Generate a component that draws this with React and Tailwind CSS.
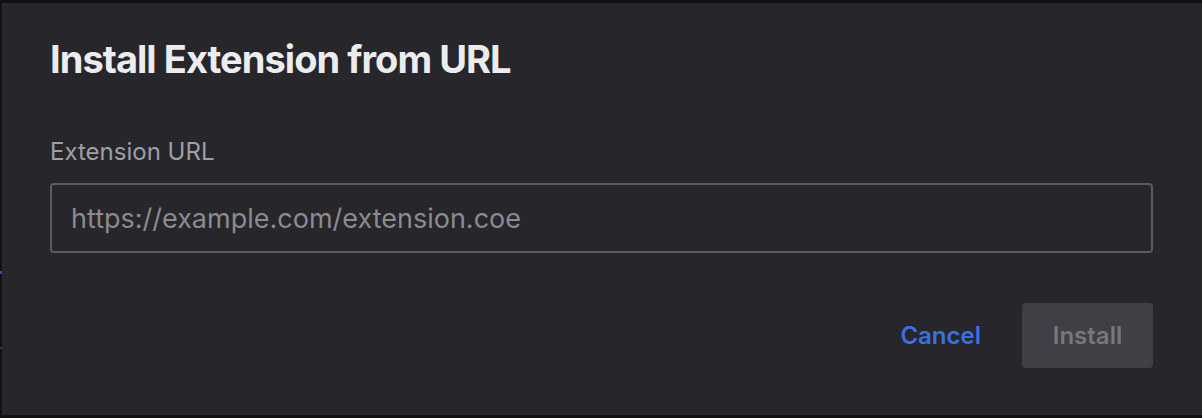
import React, { useState } from 'react';

export default function App() {
  const [url, setUrl] = useState('');

  return (
    <div className="w-[1202px] h-[418px] bg-[#111114] pt-[3px] pb-[3px] flex font-['Inter',sans-serif] overflow-hidden">
      {/* sliver of the page behind the dialog */}
      <div className="w-[2px] flex flex-col">
        <div className="h-[268px]" />
        <div className="h-[3px] bg-[#2f4f9a]" />
        <div className="h-[73px]" />
        <div className="h-[2px] bg-[#3a3a3f]" />
      </div>

      <div className="flex-1 bg-[#26262b] flex flex-col pl-12 pr-[49px] pt-[33px]">
        <h1 className="text-[38px] leading-[46px] font-bold text-[#ececee] tracking-[-0.025em]">Install Extension from URL</h1>

        <label className="mt-[55px] text-[24px] leading-[29px] text-[#9f9fa6]">Extension URL</label>
        <input
          value={url}
          onChange={(e) => setUrl(e.target.value)}
          placeholder="https://example.com/extension.coe"
          className="mt-[17px] h-[70px] w-full rounded-[4px] border-2 border-[#5b5b60] bg-transparent px-[19px] text-[27px] text-[#e5e5e7] placeholder:text-[#8b8b90] outline-none"
        />

        <div className="mt-[50px] flex items-center justify-end gap-[41px]">
          <button className="text-[24px] font-semibold text-[#3b6fe4]">Cancel</button>
          <button disabled className="h-[65px] w-[131px] rounded-[4px] bg-[#3f3f45] text-[24px] font-semibold text-[#77777c]">
            Install
          </button>
        </div>
      </div>
    </div>
  );
}
